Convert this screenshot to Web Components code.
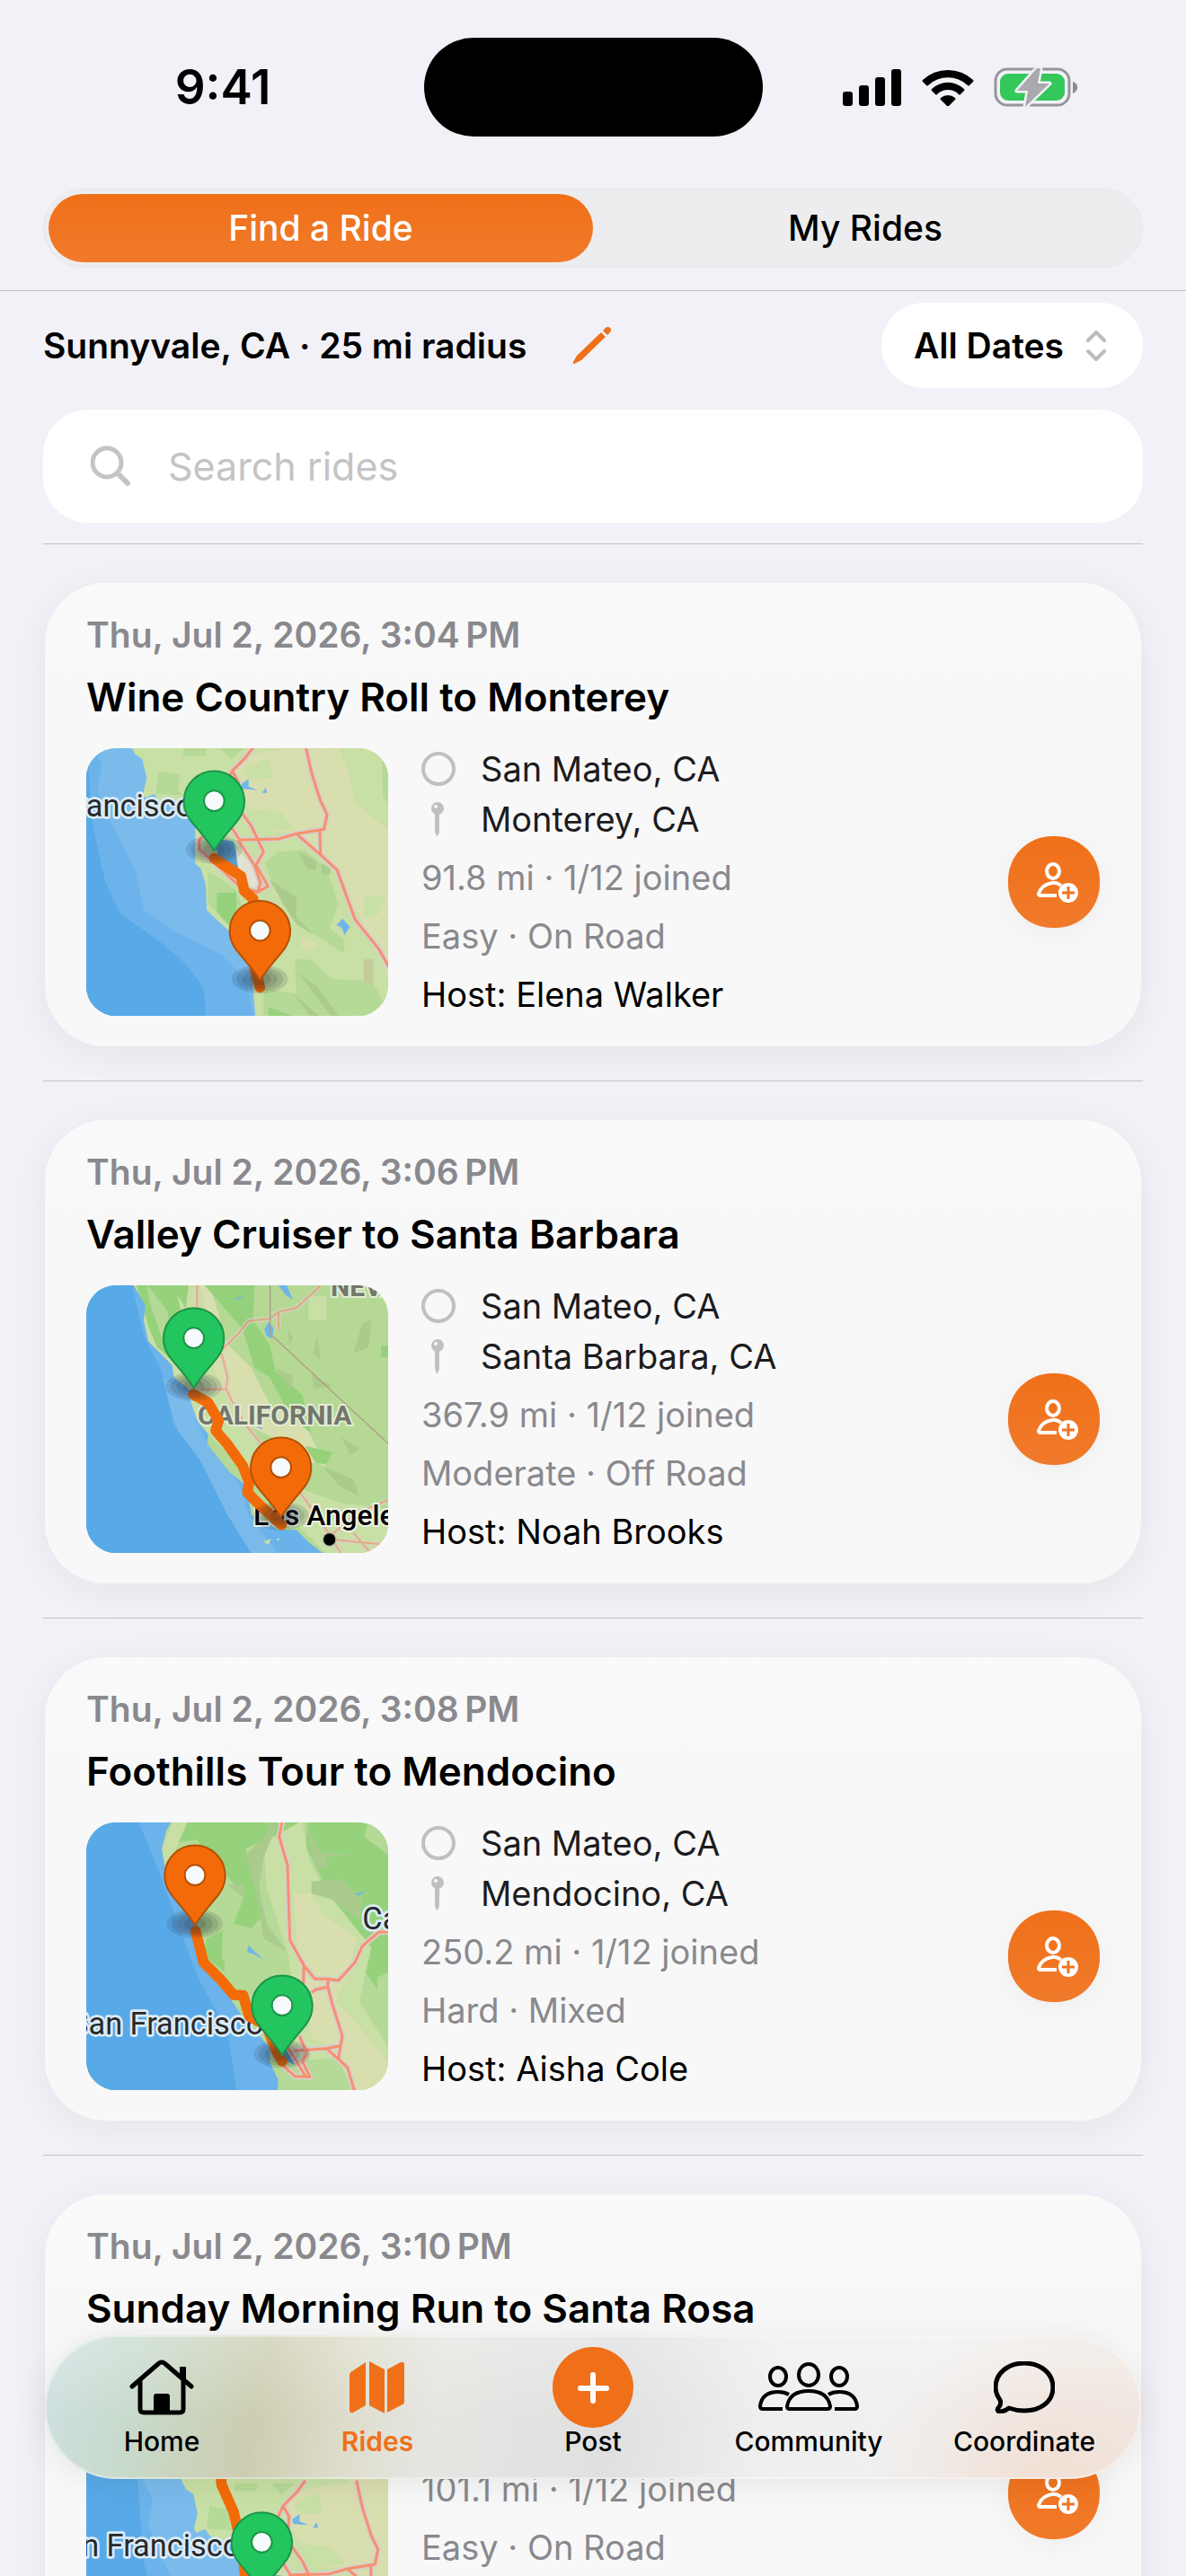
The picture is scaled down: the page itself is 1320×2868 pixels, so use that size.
<!DOCTYPE html>
<html lang="en">
<head>
<meta charset="utf-8">
<meta name="viewport" content="width=device-width, initial-scale=1">
<title>Rides</title>
<style>
  :root {
    --accent: #f07019;
    --accent-fill: linear-gradient(#f07019, #f07a2b);
    --muted: #89898e;
    --faint: #c4c4c6;
    --line: #c3c2c9;
    --page: #f2f1f7;
    --gutter: 48px;
  }
  body {
    margin: 0;
    background: var(--page);
    color: #000;
    font-family: Inter, "Liberation Sans", sans-serif;
    font-size: 39px;
    line-height: 48px;
  }
</style>
</head>
<body>
<rides-app>
  <status-bar slot="header" time="9:41"></status-bar>
  <segmented-control slot="header" options="Find a Ride,My Rides"></segmented-control>

  <ride-filters place="Sunnyvale, CA · 25 mi radius"></ride-filters>
  <ride-card when="Thu, Jul 2, 2026, 3:04&#8239;PM" from="San Mateo, CA" to="Monterey, CA"
    stats="91.8 mi · 1/12 joined" level="Easy · On Road" host="Elena Walker" map="monterey">Wine Country Roll to Monterey</ride-card>
  <ride-card when="Thu, Jul 2, 2026, 3:06&#8239;PM" from="San Mateo, CA" to="Santa Barbara, CA"
    stats="367.9 mi · 1/12 joined" level="Moderate · Off Road" host="Noah Brooks" map="barbara">Valley Cruiser to Santa Barbara</ride-card>
  <ride-card when="Thu, Jul 2, 2026, 3:08&#8239;PM" from="San Mateo, CA" to="Mendocino, CA"
    stats="250.2 mi · 1/12 joined" level="Hard · Mixed" host="Aisha Cole" map="mendocino">Foothills Tour to Mendocino</ride-card>
  <ride-card when="Thu, Jul 2, 2026, 3:10&#8239;PM" from="San Mateo, CA" to="Santa Rosa, CA"
    stats="101.1 mi · 1/12 joined" level="Easy · On Road" host="Mia Chen" map="rosa">Sunday Morning Run to Santa Rosa</ride-card>

  <tab-bar slot="tabs">
    <tab-item icon="home">Home</tab-item>
    <tab-item icon="map" active>Rides</tab-item>
    <tab-item icon="plus">Post</tab-item>
    <tab-item icon="people">Community</tab-item>
    <tab-item icon="bubble">Coordinate</tab-item>
  </tab-bar>
</rides-app>

<script>
// name: [width, height, markup]
const ICONS = {
  signal: [66, 42, `<g fill="currentColor"><rect y="26" width="11" height="16" rx="3"/><rect x="18" y="19" width="11" height="23" rx="3"/><rect x="36" y="10" width="11" height="32" rx="3"/><rect x="54" y="1" width="11" height="41" rx="3"/></g>`],
  wifi: [58, 42, `<g fill="currentColor"><path d="M1 13a41 41 0 0 1 56 0q1 1 0 2l-4 4q-1 1-2 0a32 32 0 0 0-44 0q-1 1-2 0l-4-4q-1-1 0-2z"/><path d="M11 23a26 26 0 0 1 36 0q1 1 0 2l-4 4q-1 1-2 0a17 17 0 0 0-24 0q-1 1-2 0l-4-4q-1-1 0-2z"/><path d="M21 33a12 12 0 0 1 16 0q1 1 0 2l-7 7q-1 1-2 0l-7-7q-1-1 0-2z"/></g>`],
  battery: [94, 46, `<rect x="2" y="3" width="82" height="40" rx="13" fill="none" stroke="#96969a" stroke-width="3"/><rect x="7" y="8" width="72" height="30" rx="9" fill="#34c759"/><path d="M88 17c7 2 7 10 0 13z" fill="#8b8b8f"/><path d="M48 2 26 27h12L35 45 62 19H49L52 2z" fill="#a9a9ae" stroke="#f2f1f7" stroke-width="5" stroke-linejoin="round" paint-order="stroke"/>`],
  pencil: [44, 44, `<path d="M5 33 32 7l5 5L10 38 2 42q-2 0-1-2zM34 5l3-3q3-2 5 0t0 5l-3 3z" fill="currentColor"/>`],
  updown: [24, 34, `<path d="m3 11 9-9 9 9M3 23l9 9 9-9" fill="none" stroke="currentColor" stroke-width="4" stroke-linecap="round" stroke-linejoin="round"/>`],
  search: [44, 46, `<g fill="none" stroke="currentColor" stroke-width="5"><circle cx="18" cy="19" r="16"/><path d="m30 31 11 11" stroke-width="6" stroke-linecap="round"/></g>`],
  circle: [38, 38, `<circle cx="19" cy="19" r="17" fill="none" stroke="currentColor" stroke-width="4"/>`],
  pin: [38, 38, `<path d="M15 13h5v20l-2 5h-1l-2-5z" fill="currentColor"/><circle cx="18" cy="7" r="7" fill="currentColor"/><circle cx="16" cy="5" r="2" fill="#f8f8f8"/>`],
  join: [56, 48, `<g transform="translate(8)"><g fill="none" stroke="#fff" stroke-width="4"><ellipse cx="19" cy="12" rx="7" ry="8"/><path d="M28 28Q23 24 18 25 6 27 3 37q0 2 2 2h18" stroke-linejoin="round"/></g><circle cx="36" cy="36" r="11" fill="#fff"/><path d="M36 29v14M29 36h14" stroke="#f07524" stroke-width="3"/></g>`],
  home: [72, 64, `<g fill="none" stroke="currentColor" stroke-width="5" stroke-linecap="round" stroke-linejoin="round"><path d="M3 31 33 5q3-2 6 0l30 26"/><path d="M12 25v31q0 4 4 4h40q4 0 4-4V25"/></g><path d="M56 10q0-1 1-1h5q1 0 1 1v15l-7-6zM27 42q0-3 3-3h12q3 0 3 3v18H27z" fill="currentColor"/>`],
  map: [62, 58, `<path d="M0 16q0-4 3-5L18 1v48L4 57q-4 1-4-3zM22 0l17 9v49l-17-9zM42 9 57 1q4-1 4 3v41q0 2-2 3l-17 9z" fill="currentColor"/>`],
  people: [114, 56, `<g fill="none" stroke="currentColor" stroke-width="4" transform="translate(1)"><ellipse cx="56" cy="14" rx="11" ry="12"/><ellipse cx="22" cy="16" rx="9" ry="10"/><ellipse cx="90" cy="16" rx="9" ry="10"/><path d="M35 52h42q3 0 3-3-3-17-24-17T32 49q0 3 3 3zM27 52H5q-3 0-3-3Q4 33 22 33q7 0 12 3M85 52h22q3 0 3-3-2-16-20-16-7 0-12 3"/></g>`],
  bubble: [68, 58, `<path d="M34 2c18 0 32 11 32 27S52 55 34 55q-9 0-17-3-5 4-11 4-3-1-1-4 4-4 2-9Q2 36 2 29C2 13 16 2 34 2z" fill="none" stroke="currentColor" stroke-width="5" stroke-linejoin="round"/>`],
  plus: [90, 90, `<circle cx="45" cy="45" r="45" fill="#f07019"/><path d="M45 31v29M31 46h29" stroke="#fff" stroke-width="6" stroke-linecap="round"/>`]
};

// Adds an open shadow root filled from a template
class Base extends HTMLElement {
  constructor() {
    super();
    this.root = this.attachShadow({ mode: "open" });
  }
  connectedCallback() {
    const template = document.createElement("template");
    template.innerHTML = this.template();
    this.root.replaceChildren(template.content.cloneNode(true));
  }
  attr(name) {
    return this.getAttribute(name) || "";
  }
}

class AppIcon extends Base {
  template() {
    const [w, h, body] = ICONS[this.attr("name")];
    return `
      <style>:host { display: block; flex: none; } svg { display: block; }</style>
      <svg width="${w}" height="${h}" viewBox="0 0 ${w} ${h}" aria-hidden="true">${body}</svg>`;
  }
}

class RidesApp extends Base {
  template() {
    return `
      <style>
        :host { display: flex; flex-direction: column; height: 100vh; position: relative; overflow: hidden; }
        header { border-bottom: 1px solid var(--line); padding-bottom: 25px; }
        main { flex: 1; min-height: 0; overflow-y: auto; scrollbar-width: none; padding: 13px var(--gutter) 0; }
        footer { position: absolute; left: 50px; right: 50px; bottom: 108px; }
      </style>
      <header><slot name="header"></slot></header>
      <main><slot></slot></main>
      <footer><slot name="tabs"></slot></footer>`;
  }
}

class StatusBar extends Base {
  template() {
    return `
      <style>
        :host { display: grid; grid-template-columns: 1fr 377px 1fr; align-items: center; padding: 42px 0 58px; }
        .time { justify-self: end; padding-right: 170px; font-size: 53px; line-height: 60px; font-weight: 600; }
        .island { height: 110px; border-radius: 55px; background: #000; }
        .icons { display: flex; align-items: center; gap: 22px; padding-left: 89px; }
      </style>
      <span class="time">${this.attr("time")}</span>
      <span class="island"></span>
      <span class="icons">
        <app-icon name="signal"></app-icon><app-icon name="wifi"></app-icon><app-icon name="battery"></app-icon>
      </span>`;
  }
}

class SegmentedControl extends Base {
  template() {
    const buttons = this.attr("options").split(",")
      .map((text, i) => `<button role="tab" aria-selected="${i === 0}">${text}</button>`).join("");
    return `
      <style>
        :host { display: block; margin: 0 var(--gutter); }
        div { display: flex; box-sizing: border-box; height: 88px; padding: 5px; border-radius: 44px; background: #ededef; border: 1px solid #e8e8ec; }
        button { flex: 1; border: 0; border-radius: 38px; background: none; color: #000; font: inherit; font-weight: 500; cursor: pointer; }
        button[aria-selected=true] { background: var(--accent-fill); color: #fff; }
      </style>
      <div role="tablist">${buttons}</div>`;
  }
  connectedCallback() {
    super.connectedCallback();
    const buttons = [...this.root.querySelectorAll("button")];
    for (const button of buttons) {
      button.addEventListener("click", () => {
        buttons.forEach(b => b.setAttribute("aria-selected", b === button));
      });
    }
  }
}

class RideFilters extends Base {
  template() {
    return `
      <style>
        :host { display: flex; flex-direction: column; gap: 24px; padding-bottom: 23px; }
        .row { display: flex; align-items: center; }
        .place { font-weight: 600; }
        button { margin-left: 51px; padding: 0; border: 0; background: none; color: var(--accent); cursor: pointer; }
        .dates { display: flex; align-items: center; gap: 23px; box-sizing: border-box; height: 95px; margin-left: auto; padding: 0 40px 0 36px; border-radius: 48px; background: #fff; color: #bcbcbf; }
        select { appearance: none; border: 0; padding: 0; background: none; color: #000; font: inherit; font-weight: 600; outline: none; }
        .search { display: flex; align-items: center; gap: 42px; height: 126px; padding: 0 53px; border-radius: 50px; background: #fff; color: var(--faint); }
        input { flex: 1; min-width: 0; border: 0; padding: 0; background: none; font: inherit; font-size: 43px; line-height: 56px; outline: none; }
        input::placeholder { color: var(--faint); opacity: 1; }
      </style>
      <div class="row">
        <span class="place">${this.attr("place")}</span>
        <button aria-label="Edit location"><app-icon name="pencil"></app-icon></button>
        <label class="dates">
          <select aria-label="Dates"><option>All Dates</option><option>Today</option></select>
          <app-icon name="updown"></app-icon>
        </label>
      </div>
      <label class="search">
        <app-icon name="search"></app-icon>
        <input type="search" placeholder="Search rides" aria-label="Search rides">
      </label>`;
  }
}

class RideCard extends Base {
  template() {
    return `
      <style>
        :host { display: block; border-top: 1px solid var(--line); padding: 43px 2px 38px; }
        article { padding: 34px 46px; border-radius: 68px; background: linear-gradient(#fafafa, #f8f8f8 20%); box-shadow: 0 8px 40px rgba(40, 38, 60, .06); }
        .when { color: var(--muted); font-weight: 600; }
        h2 { margin: 17px 0 28px; font-size: 44px; line-height: 56px; font-weight: 600; }
        .body { display: flex; align-items: flex-end; }
        ride-map { flex: none; margin-right: 37px; }
        .info { display: flex; flex-direction: column; gap: 17px; flex: 1; min-width: 0; font-size: 38px; }
        .stops { display: flex; flex-direction: column; gap: 8px; color: #1c1c1e; }
        .stop { display: flex; align-items: center; gap: 28px; }
        .stop app-icon { color: #c0c0c2; }
        .muted { color: var(--muted); }
        button { display: grid; place-items: center; align-self: center; width: 102px; height: 102px; border: 0; padding: 0; border-radius: 49px; background: var(--accent-fill); box-shadow: 0 6px 36px rgba(0, 0, 0, .05); cursor: pointer; }
      </style>
      <article>
        <div class="when">${this.attr("when")}</div>
        <h2><slot></slot></h2>
        <div class="body">
          <ride-map region="${this.attr("map")}"></ride-map>
          <div class="info">
            <div class="stops">
              <div class="stop"><app-icon name="circle"></app-icon><span>${this.attr("from")}</span></div>
              <div class="stop"><app-icon name="pin"></app-icon><span>${this.attr("to")}</span></div>
            </div>
            <div class="muted">${this.attr("stats")}</div>
            <div class="muted">${this.attr("level")}</div>
            <div>Host: ${this.attr("host")}</div>
          </div>
          <button aria-label="Join ride"><app-icon name="join"></app-icon></button>
        </div>
      </article>`;
  }
}

// Roads get a grey casing under the coloured line
const roads = (d, width = 9) => `
  <path d="${d}" fill="none" stroke="#d6d0cb" stroke-width="${width + 11}" stroke-linejoin="round"/>
  <path d="${d}" fill="none" stroke="#f7906c" stroke-width="${width}" stroke-linejoin="round"/>`;

const route = d => `<path d="${d}" fill="none" stroke="#f36b08" stroke-width="35" stroke-linecap="round" stroke-linejoin="round"/>`;

const markerShadow = (x, y) => `
  <g fill="#14202c" fill-opacity=".13" transform="translate(${x} ${y - 5})">
    <ellipse rx="94" ry="48"/><ellipse rx="78" ry="40"/><ellipse rx="58" ry="32"/><ellipse rx="36" ry="22"/>
  </g>`;

// x, y is the tip of the marker
const marker = (x, y, fill, edge) => `
  <g transform="translate(${x} ${y})" stroke="${edge}" stroke-width="6">
    <path d="M0 0C-16-30-54-70-81-105A101 101 0 1 1 81-105C54-70 16-30 0 0z" fill="${fill}" stroke-linejoin="round"/>
    <circle cy="-167" r="34" fill="#f6fafc"/>
  </g>`;
const green = (x, y) => marker(x, y, "#23c55e", "#1c9449");
const orange = (x, y) => marker(x, y, "#f36b08", "#b55005");

const label = (x, y, text, extra = "") =>
  `<text x="${x}" y="${y}" font-size="103" fill="#26292c" stroke="#dcebf5" stroke-width="16" stroke-linejoin="round" paint-order="stroke" ${extra}>${text}</text>`;

const bayArea = `
  <rect x="-400" y="-600" width="1800" height="1800" fill="#c8dfa5"/>
  <path d="M700-600H1400V800L1056 800 960 600 860 420 750 330 690 200 760 100z" fill="#d9deae"/>
  <path d="M520 120 600 60 720 39 850 39 860 260 830 320 680 320 600 250z" fill="#d9deae"/>
  <path d="M890 39H1100V330L1040 300 945 220 920 110z" fill="#c8dfa5"/>
  <path d="M1035 75 1060 70V230l-22-30z" fill="#b5d996"/>
  <path d="M372 39h76v26h-76zM495 39h80l-45 38zM290 115l70 12-5 55 20 15-95-6z" fill="#b5d996"/>
  <path d="M570 110 655 70 670 140 590 142zM600 240l100 15 40 55-100 5zM975 528l75 8-30 60-45 8z" fill="#c8dfa5"/>
  <path d="M645 420 690 385 780 380 850 440 890 560 860 640 910 680 908 724 800 655 740 590 670 490z" fill="#b5d996"/>
  <path d="m660 478 90 60v65l60 60-60-35-45-70zM755 385l60 30v30l-30-3zM833 422l30 20v18h-30z" fill="#aacb8d"/>
  <path d="M760 670l55 15v30l-45-8z" fill="#d9deae"/>
  <path d="M450 450 520 500 620 550 680 650 740 780 700 820 600 740 450 580z" fill="#c8dfa5"/>
  <path d="M455 450 545 510 600 640 560 650 455 560z" fill="#b5d996"/>
  <path d="M484 522h65v60l-15 60-50-55z" fill="#96d27c"/>
  <path d="M640 840 750 860 745 745h50l75 65 130 5 40 70-60 60H640z" fill="#b5d996"/>
  <path d="m755 790 60 40 75 103h-25zM735 855l90 78h-30z" fill="#aacb8d"/>
  <path d="M656 903l80 30h-80z" fill="#96d27c"/>
  <path d="M974 744h32v80h-32z" fill="#c3cb9a"/>
  <path d="M-400-600H120L150-100 200 39 212 60 235 75 250 140 238 190 245 205 275 192 290 215 380 250 412 290V425L430 440 447 495 450 580 525 650 600 760 605 840 635 1200H-400z" fill="#7abbec"/>
  <path d="M-400-600H60L70 39 100 90 85 180 150 330 210 440 240 580 340 650 500 730 580 810 610 950V1200H-400z" fill="#6bb3ea"/>
  <path d="M-400-600H0L50 39 70 300 110 480 160 590 300 690 380 760 440 840 470 1200H-400z" fill="#58a9e7"/>
  <path d="M470 340 540 350 560 430 580 450 575 480 490 400z" fill="#5b9fcf"/>
  <path d="M545 370 600 430 625 500 600 505 555 440z" fill="#e2e1d2"/>
  <path d="m565 160 25-18v25l30 12-50-4zm70 28 12-18 5 18zM884 630l20-22 24 28-18 28-8-24z" fill="#70b6ea"/>
  ${roads("M610 30 580 70 535 115 555 150 550 230 600 300 640 385 615 430 655 500 620 520 560 500 425 375V345L450 320M535 115 515 160M555 345 610 430 630 490 620 520M530 300 560 345 690 342 750 325 842 310 852 260 830 215 800 120 780 30M750 325 830 395 828 310M830 395 885 445 945 610 1025 710 1075 800 1120 900")}`;

const central = `
  <rect width="1100" height="960" fill="#b5d996"/>
  <path d="M205 30H440L450 260 510 350 550 470 690 610 780 720 900 760 1056 780V930H860L620 700 400 470 330 330 255 220z" fill="#c8dfa5"/>
  <path d="M215 30h130l30 140 60 200-60-50-90-80-30-70zM330 30h60l-10 80z" fill="#96d27c"/>
  <path d="M250 30l70 90 10 100-30-10-40-120z" fill="#b5d996"/>
  <path d="M430 30h30l60 200 80 80 60 120 130 90 60 120-60-20-120-80-110-50-80-160z" fill="#d9deae"/>
  <path d="M440 30h170l-5 120 55 80 20 90 90 80 30 130-80-80-60-110-50-30-40-130z" fill="#96d27c"/>
  <path d="M780 570l90 20-20 40-35-2zM1032 235h30v38h-30z" fill="#96d27c"/>
  <path d="m970 160 30-10-10 90-50 20zM680 310l60 25-10 50zM800 330l70 40-60 10zM840 640l100 40 20 60-70-40zM820 200l10 80-25-20zM900 540l60 40-30 20zM720 180l20 30-15 20z" fill="#aacb8d"/>
  <path d="M790 70h60v80h-60zM600 690l240 90 216 40v110H850l-90-90z" fill="#c8dfa5"/>
  <path d="M40 30H205L245 100 240 150 255 220 335 300 340 340 390 380 400 450 430 500 455 530 450 570 530 660 580 700 600 800 690 850 750 850 790 890 840 930H40z" fill="#6bb3ea"/>
  <path d="M300 340 390 400 420 490 450 560 560 700 590 800 690 930H560L420 700 340 480z" fill="#7abbec"/>
  <path d="M40 30H200L240 200 300 320 340 500 430 620 520 800 600 930H40z" fill="#58a9e7"/>
  <path d="m645 890 15-5-5 10zm40-7 8-3z" fill="#c8dfa5" stroke="#c8dfa5" stroke-width="6"/>
  <path d="M690 30h25l18 46-18-12zM645 180l12-22 15 20-5 30-15-6zM545 80l25-8M620 506l16 6" fill="#70b6ea" stroke="#70b6ea" stroke-width="4"/>
  <g opacity=".65">${roads("M418 30V130M500 250 555 195 590 152 660 145 690 122 750 108 830 35M500 260 520 340 515 380 540 430 580 500 680 620 780 750 850 850M430 380H520M690 122V180M1056 750 960 790 850 880 950 890 1056 900M850 850 900 930M940 860 1000 930", 6)}</g>
  <path d="M662 30V195L1060 565" fill="none" stroke="#b19a86" stroke-width="4"/>`;

const north = `
  <rect width="1100" height="960" fill="#b5d996"/>
  <path d="M335 35H790L580 130 640 350 600 395 500 370 480 300 420 100 335 110zM790 35H1060V600H1020L950 500 890 350 840 240 780 120zM450 430l60-30v140l-70-50z" fill="#96d27c"/>
  <path d="M510 210 575 290 540 380 600 500 500 500 505 380 470 300z" fill="#b5d996"/>
  <path d="M335 42h50l-55 130-10 40-20-80z" fill="#c8dfa5"/>
  <path d="M640 110 770 35 790 160 840 260 1000 460 960 640 1060 800V940H680L760 700 720 480 650 260z" fill="#c8dfa5"/>
  <path d="M740 280 800 280 840 350 950 430 920 560 880 640 940 700 1060 850V940H940L880 800 800 760 760 560z" fill="#d9deae"/>
  <path d="M580 150 655 80V35h35L640 160 625 260 650 380 715 470 640 430 620 300zM780 42l50 100 110 12-90 2v45l-40-10zM800 240l100-10 70 70-10 70-90-70-70-20zM520 250l55 0v45z" fill="#aacb8d"/>
  <path d="M975 90 990 42h70v110zM1020 560l40-20v140l-40-20zM690 840l200-10 50 110H690z" fill="#b5d996"/>
  <path d="M40 35H335L315 70 300 130 310 190 420 390 450 500 480 560 570 690 640 770 665 800 660 840 688 900V940H40z" fill="#6bb3ea"/>
  <path d="M40 35H220L280 180 340 340 380 450 420 560 520 740 550 940H40z" fill="#58a9e7"/>
  <path d="M690 790l50 20 20 50-40-20z" fill="#5b9fcf"/>
  <path d="m585 475 5-22 50 48-35-20zM943 284l38-16-20 18z" fill="#70b6ea"/>
  ${roads("M703 35 692 90 720 185 728 435 775 520 812 565H855L890 570 945 510 970 455 1025 408H1075M775 520 772 600M800 610 815 600 855 592 870 650 903 755 890 830M855 570V592M740 805 850 797 895 788M850 797 920 860 945 945M700 850 745 890 795 892 770 840 785 815 760 755M720 790 780 890")}`;

// region: [viewBox, markup]
const REGIONS = {
  monterey: ["48 39 1008 894", `${bayArea}${label(405, 266, "San Francisco", 'text-anchor="end"')}
    ${route("M475 407 565 467 575 515 605 542 628 700 610 770 628 838")}${markerShadow(475, 382)}${markerShadow(628, 815)}
    ${green(475, 382)}${orange(628, 815)}`],
  barbara: ["48 33 1008 894", `${central}
    <g font-size="90" font-weight="700" fill="#71776b" stroke="#e3ebd4" stroke-width="12">
      <text x="420" y="497" paint-order="stroke">CALIFORNIA</text>
      <text x="864" y="69" paint-order="stroke">NEVADA</text>
    </g>
    <text x="606" y="834" font-size="95" font-weight="500" fill="#000" stroke="#eef3e6" stroke-width="12" paint-order="stroke">Los Angeles</text>
    <circle cx="860" cy="882" r="24" fill="#b9b9a4"/><circle cx="860" cy="882" r="20" fill="#000"/>
    ${route("M405 397 455 425 490 485 480 518 520 565 570 635 592 690 586 725 620 760 700 833")}${markerShadow(407, 376)}${markerShadow(698, 808)}
    ${green(407, 376)}${orange(698, 808)}`],
  mendocino: ["48 42 1008 894", `${north}${label(640, 750, "San Francisco", 'text-anchor="end"')}${label(970, 398, "Calistoga")}
    ${route("M413 405 440 510 495 565 540 618 572 620 592 690 650 720 680 800 702 840")}${markerShadow(411, 385)}${markerShadow(702, 820)}
    ${orange(411, 385)}${green(702, 820)}`],
  rosa: ["168 141 1008 894", `<g transform="translate(290 515)">${bayArea}</g>${label(682, 797, "San Francisco", 'text-anchor="end"')}
    ${route("M600 380 620 560 660 650 690 780 700 880 754 945")}${markerShadow(754, 918)}
    ${green(754, 918)}`]
};

class RideMap extends Base {
  template() {
    const [viewBox, body] = REGIONS[this.attr("region")];
    return `
      <style>
        :host { display: block; width: 336px; height: 298px; border-radius: 33px; overflow: hidden; }
        svg { display: block; width: 100%; height: 100%; font-family: Roboto, sans-serif; }
      </style>
      <svg viewBox="${viewBox}" role="img" aria-label="Route map">${body}</svg>`;
  }
}

class TabBar extends Base {
  template() {
    return `
      <style>
        :host { display: block; }
        nav {
          display: grid; grid-auto-flow: column; grid-auto-columns: 1fr; padding: 13px 10px 27px; border-radius: 80px;
          background:
            linear-gradient(rgba(255, 255, 255, .25), rgba(255, 255, 255, 0) 60%),
            radial-gradient(circle at 92% 110%, #f1dfd3, rgba(240, 224, 214, 0) 18%),
            linear-gradient(100deg, #cfe0e2, #c8dacb 9%, #cccdb0 20%, #dddccb 28%, #e5e6e2 36%, #e0e0e0 52%, #efefef 66%, #f0f0f0 82%, #f0eae6);
          box-shadow: inset 0 0 0 2px rgba(255, 255, 255, .35), 0 4px 36px rgba(0, 0, 0, .08);
        }
      </style>
      <nav><slot></slot></nav>`;
  }
}

class TabItem extends Base {
  template() {
    return `
      <style>
        :host { display: block; min-width: 0; }
        a { display: flex; flex-direction: column; align-items: center; color: #000; text-decoration: none; font-size: 30px; line-height: 30px; font-weight: 500; }
        :host([active]) a { color: var(--accent); font-weight: 600; }
        .icon { display: grid; place-items: center; height: 90px; }
      </style>
      <a href="#"><span class="icon"><app-icon name="${this.attr("icon")}"></app-icon></span><slot></slot></a>`;
  }
}

customElements.define("app-icon", AppIcon);
customElements.define("rides-app", RidesApp);
customElements.define("status-bar", StatusBar);
customElements.define("segmented-control", SegmentedControl);
customElements.define("ride-filters", RideFilters);
customElements.define("ride-map", RideMap);
customElements.define("ride-card", RideCard);
customElements.define("tab-bar", TabBar);
customElements.define("tab-item", TabItem);
</script>
</body>
</html>
